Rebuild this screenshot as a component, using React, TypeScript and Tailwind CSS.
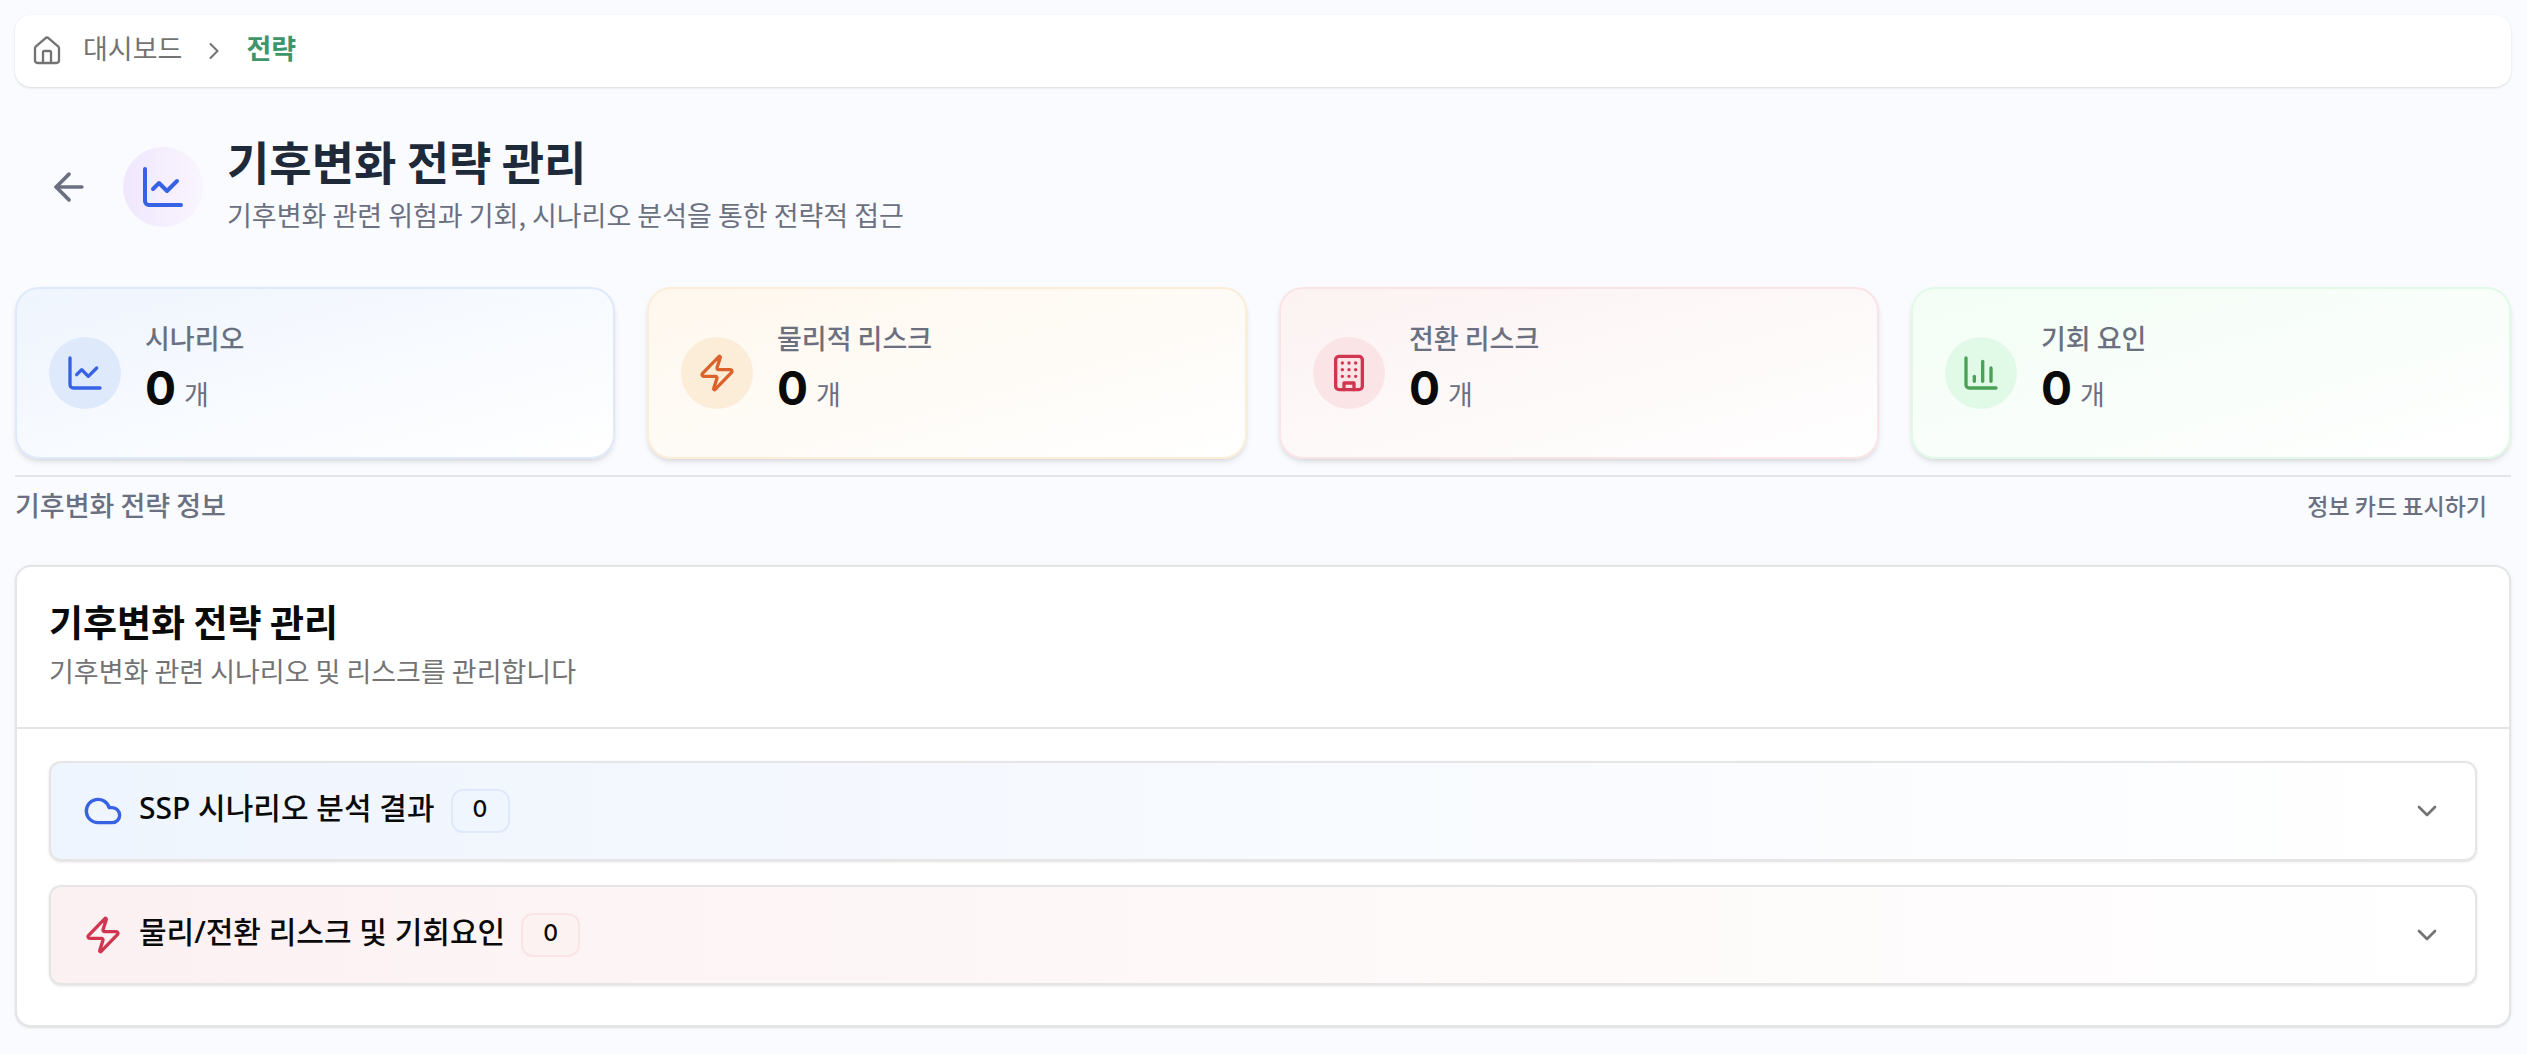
import React from "react";
import {
  ArrowLeft,
  ChartColumn,
  ChartLine,
  ChevronDown,
  ChevronRight,
  Cloud,
  House,
  Zap,
} from "lucide-react";

function Building({ size = 24 }: { size?: number }) {
  return (
    <svg
      width={size}
      height={size}
      viewBox="0 0 24 24"
      fill="none"
      stroke="currentColor"
      strokeWidth="2"
      strokeLinecap="round"
      strokeLinejoin="round"
      aria-hidden="true"
    >
      <rect x="4" y="2" width="16" height="20" rx="2" />
      <path d="M9 22v-4h6v4" />
      <path d="M8 6h.01M12 6h.01M16 6h.01M8 10h.01M12 10h.01M16 10h.01M8 14h.01M12 14h.01M16 14h.01" />
    </svg>
  );
}

const stats = [
  { label: "시나리오", value: 0, Icon: ChartLine, card: "border-[#dee9fb] from-[#eff5fe]", icon: "bg-[#dee9fb] text-[#3662e3]" },
  { label: "물리적 리스크", value: 0, Icon: Zap, card: "border-[#fcedd8] from-[#fef7ed]", icon: "bg-[#fcedd8] text-[#dc622b]" },
  { label: "전환 리스크", value: 0, Icon: Building, card: "border-[#fae4e5] from-[#fcf2f2]", icon: "bg-[#fae4e5] text-[#d03650]" },
  { label: "기회 요인", value: 0, Icon: ChartColumn, card: "border-[#e1fae8] from-[#f3fdf5]", icon: "bg-[#e1fae8] text-[#4ba256]" },
];

const sections = [
  { title: "SSP 시나리오 분석 결과", count: 0, Icon: Cloud, row: "from-[#eff5fe]", icon: "text-[#3662e3]", badge: "border-[#dee9fb] bg-[#f0f6fe]" },
  { title: "물리/전환 리스크 및 기회요인", count: 0, Icon: Zap, row: "from-[#fcf1f2]", icon: "text-[#d03650]", badge: "border-[#fae4e5] bg-[#fcf2f2]" },
];

export default function App() {
  return (
    <div className="min-h-screen bg-[#fafbff] py-[15px] pr-4 pl-[15px] font-['Noto_Sans_CJK_KR',sans-serif] text-neutral-950">
      <nav aria-label="breadcrumb" className="flex h-[72px] items-center rounded-2xl bg-white px-4 text-[27px] leading-9 shadow-sm">
        <a href="#dashboard" className="flex items-center gap-5 text-[#737373]">
          <House size={32} strokeWidth={1.75} />
          <span className="pb-1.5">대시보드</span>
        </a>
        <ChevronRight size={28} strokeWidth={1.75} className="mx-[18px] text-[#737373]" />
        <span aria-current="page" className="pb-1.5 font-bold text-[#3f956a]">전략</span>
      </nav>

      <header className="flex items-center px-8 py-12">
        <button type="button" aria-label="뒤로" className="text-[#6b7080]">
          <ArrowLeft size={44} strokeWidth={2} />
        </button>
        <div className="ml-8 flex size-20 items-center justify-center rounded-full bg-linear-to-r from-[#f0e7fd] to-[#f9f5fe] text-[#3662e3]">
          <ChartLine size={48} />
        </div>
        <div className="ml-6">
          <h1 className="text-[46px] leading-[50px] font-bold text-gray-800">기후변화 전략 관리</h1>
          <p className="pt-1.5 text-[27px] leading-[48px] text-[#6b7080]">기후변화 관련 위험과 기회, 시나리오 분석을 통한 전략적 접근</p>
        </div>
      </header>

      <section className="grid grid-cols-4 gap-8">
        {stats.map(({ label, value, Icon, card, icon }) => (
          <div key={label} className={`flex h-[172px] items-center gap-6 rounded-3xl border-2 bg-linear-to-br to-white px-8 shadow-md ${card}`}>
            <div className={`flex size-[72px] items-center justify-center rounded-full ${icon}`}>
              <Icon size={40} />
            </div>
            <div className="pb-2.5">
              <p className="text-[27px] leading-10 font-medium text-[#6b7080]">{label}</p>
              <p className="flex items-baseline gap-2 font-['Inter',sans-serif] text-[46px] leading-[60px] font-bold">
                {value}
                <span className="font-['Noto_Sans_CJK_KR',sans-serif] text-[27px] leading-10 font-normal text-[#6b7080]">개</span>
              </p>
            </div>
          </div>
        ))}
      </section>

      <div className="mt-4 flex items-center justify-between border-t-2 border-neutral-200 pt-2">
        <h2 className="text-[27px] leading-10 font-medium text-[#6b7080]">기후변화 전략 정보</h2>
        <button type="button" className="px-6 text-[23px] leading-10 font-medium text-[#6b7080]">정보 카드 표시하기</button>
      </div>

      <section className="mt-10 rounded-2xl border-2 border-neutral-200 bg-white shadow-sm">
        <div className="border-b-2 border-neutral-200 p-8">
          <h2 className="text-[37px] leading-[44px] font-bold">기후변화 전략 관리</h2>
          <p className="pt-1 text-[27px] leading-[48px] text-[#737373]">기후변화 관련 시나리오 및 리스크를 관리합니다</p>
        </div>
        <div className="flex flex-col gap-6 px-8 pt-8 pb-10">
          {sections.map(({ title, count, Icon, row, icon, badge }) => (
            <button
              key={title}
              type="button"
              aria-expanded={false}
              className={`flex h-[100px] items-center rounded-xl border-2 border-neutral-200 bg-linear-to-r to-white px-8 shadow-sm ${row}`}
            >
              <Icon size={40} className={icon} />
              <span className="ml-4 pb-1.5 font-['Noto_Sans','Noto_Sans_CJK_KR',sans-serif] text-[30px] leading-10 font-medium">{title}</span>
              <span className={`ml-4 flex h-11 w-[59px] items-center justify-center rounded-xl border-2 pb-1 font-['Inter',sans-serif] text-[23px] font-medium ${badge}`}>{count}</span>
              <ChevronDown size={32} className="ml-auto text-[#737373]" />
            </button>
          ))}
        </div>
      </section>
    </div>
  );
}
